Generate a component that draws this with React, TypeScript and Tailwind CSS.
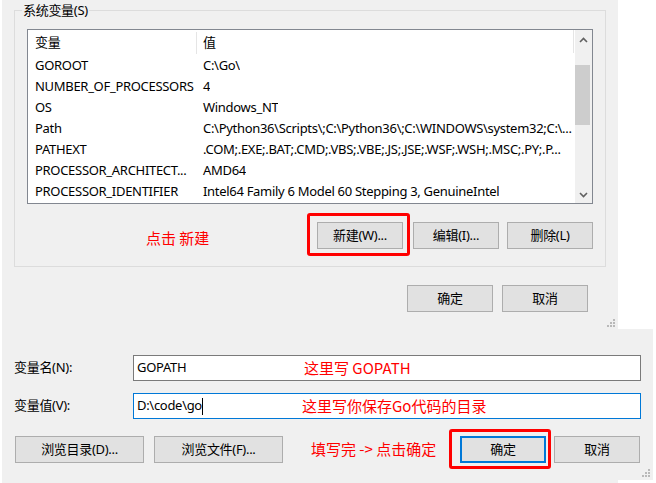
import React from "react";

const FONT = { fontFamily: '"Noto Sans", "Noto Sans CJK SC", sans-serif' };
const RED = { fontFamily: '"Noto Sans CJK SC", sans-serif' };

function Grip() {
  return (
    <svg width="9" height="9" viewBox="0 0 9 9">
      <rect x="6" y="0" width="2" height="2" fill="#b9b9b9" />
      <rect x="3" y="3" width="2" height="2" fill="#b9b9b9" />
      <rect x="6" y="3" width="2" height="2" fill="#b9b9b9" />
      <rect x="0" y="6" width="2" height="2" fill="#b9b9b9" />
      <rect x="3" y="6" width="2" height="2" fill="#b9b9b9" />
      <rect x="6" y="6" width="2" height="2" fill="#b9b9b9" />
    </svg>
  );
}

function Btn({ children, w = "w-[86px]", blue = false }: { children: React.ReactNode; w?: string; blue?: boolean }) {
  return (
    <div
      className={`${w} h-[27px] flex items-center justify-center bg-[#e1e1e1] text-[13px] tracking-[-0.3px] text-black ${
        blue ? "border-2 border-[#0078d7]" : "border border-[#adadad]"
      }`}
    >
      {children}
    </div>
  );
}

const rows: [string, string][] = [
  ["GOROOT", "C:\\Go\\"],
  ["NUMBER_OF_PROCESSORS", "4"],
  ["OS", "Windows_NT"],
  ["Path", "C:\\Python36\\Scripts\\;C:\\Python36\\;C:\\WINDOWS\\system32;C:\\..."],
  ["PATHEXT", ".COM;.EXE;.BAT;.CMD;.VBS;.VBE;.JS;.JSE;.WSF;.WSH;.MSC;.PY;.P..."],
  ["PROCESSOR_ARCHITECT...", "AMD64"],
  ["PROCESSOR_IDENTIFIER", "Intel64 Family 6 Model 60 Stepping 3, GenuineIntel"],
];

export default function App() {
  return (
    <div className="w-[656px] h-[483px] bg-white overflow-hidden text-black text-[13px] tracking-[-0.3px]" style={FONT}>
      {/* Top window */}
      <div className="relative ml-[2px] w-[616px] h-[329px] bg-[#f0f0f0] flex flex-col">
        <div className="relative ml-[12px] mt-[10px] w-[592px] h-[257px] border border-[#dcdcdc] flex flex-col pl-[12px] pt-[18px]">
          <span className="absolute left-[7px] top-[-11px] px-[1px] bg-[#f0f0f0] leading-[20px]">
            系统变量(S)
          </span>
          {/* list view */}
          <div className="w-[566px] h-[175px] border border-[#828790] bg-white flex">
            <div className="flex-1 min-w-0 overflow-hidden flex flex-col">
              <div className="h-[25px] flex items-center">
                <div className="w-[168px] pl-[7px]">变量</div>
                <div className="w-px h-[22px] bg-[#e5e5e5]" />
                <div className="flex-1 pl-[6px]">值</div>
                <div className="w-px h-[23px] bg-[#e5e5e5] self-start" />
                <div className="w-px" />
              </div>
              {rows.map(([a, b]) => (
                <div key={a} className="h-[21px] flex items-center whitespace-nowrap">
                  <div className="w-[168px] shrink-0 pl-[7px] overflow-hidden">{a}</div>
                  <div className="pl-[7px] overflow-hidden">{b}</div>
                </div>
              ))}
            </div>
            <div className="w-[17px] shrink-0 bg-[#f0f0f0] flex flex-col">
              <div className="h-[17px] flex items-center justify-center pt-[3px]">
                <svg width="9" height="6" viewBox="0 0 9 6">
                  <path d="M1 5 L4.5 1.5 L8 5" stroke="#606060" strokeWidth="1.6" fill="none" />
                </svg>
              </div>
              <div className="h-[18px]" />
              <div className="h-[60px] w-[15px] bg-[#cdcdcd]" />
              <div className="flex-1" />
              <div className="h-[17px] flex items-center justify-center">
                <svg width="9" height="6" viewBox="0 0 9 6">
                  <path d="M1 1 L4.5 4.5 L8 1" stroke="#606060" strokeWidth="1.6" fill="none" />
                </svg>
              </div>
            </div>
          </div>
          {/* button row */}
          <div className="mt-[18px] flex items-center">
            <span
              className="w-[290px] pl-[119px] pt-[5px] text-[15px] tracking-normal text-[#ff0000] whitespace-nowrap"
              style={RED}
            >
              点击 新建
            </span>
            <div className="relative">
              <div className="absolute left-[-10px] right-[-7px] top-[-9px] bottom-[-7px] border-[3px] border-[#ff0000] rounded-[3px]" />
              <Btn>新建(W)...</Btn>
            </div>
            <div className="ml-[10px]">
              <Btn>编辑(I)...</Btn>
            </div>
            <div className="ml-[8px]">
              <Btn>删除(L)</Btn>
            </div>
          </div>
        </div>
        <div className="mt-[18px] flex justify-end pr-[30px] gap-[9px]">
          <Btn>确定</Btn>
          <Btn>取消</Btn>
        </div>
        <div className="absolute right-[2px] bottom-[1px]">
          <Grip />
        </div>
      </div>

      {/* Bottom window */}
      <div className="relative ml-[2px] w-[651px] h-[151px] bg-[#f0f0f0] flex flex-col pl-[12px] pt-[26px]">
        <div className="flex items-center">
          <span className="w-[119px]">变量名(N):</span>
          <div className="w-[508px] h-[26px] border border-[#7a7a7a] bg-white flex items-center">
            <span className="pl-[3px] w-[170px]">GOPATH</span>
            <span className="text-[15px] tracking-normal text-[#ff0000]" style={RED}>
              这里写 GOPATH
            </span>
          </div>
        </div>
        <div className="mt-[12px] flex items-center">
          <span className="w-[119px]">变量值(V):</span>
          <div className="w-[508px] h-[26px] border border-[#0078d7] bg-white flex items-center">
            <span className="pl-[3px] flex items-center w-[168px]">
              D:\code\go
              <span className="inline-block w-px h-[17px] bg-black" />
            </span>
            <span className="text-[15px] tracking-normal text-[#ff0000]" style={RED}>
              这里写你保存Go代码的目录
            </span>
          </div>
        </div>
        <div className="mt-[17px] flex items-center ml-[1px]">
          <Btn w="w-[129px]">浏览目录(D)...</Btn>
          <div className="ml-[10px]">
            <Btn w="w-[129px]">浏览文件(F)...</Btn>
          </div>
          <span
            className="ml-[28px] w-[149px] text-[15px] tracking-normal text-[#ff0000] whitespace-nowrap"
            style={RED}
          >
            填写完 -&gt; 点击确定
          </span>
          <div className="relative">
            <div className="absolute left-[-11px] right-[-5px] top-[-7px] bottom-[-6px] border-[3px] border-[#ff0000] rounded-[3px]" />
            <Btn blue>确定</Btn>
          </div>
          <div className="ml-[8px]">
            <Btn>取消</Btn>
          </div>
        </div>
        <div className="absolute right-[2px] bottom-[2px]">
          <Grip />
        </div>
      </div>
      <div className="ml-[2px] w-[616px] h-[3px] bg-[#f0f0f0]" />
    </div>
  );
}
